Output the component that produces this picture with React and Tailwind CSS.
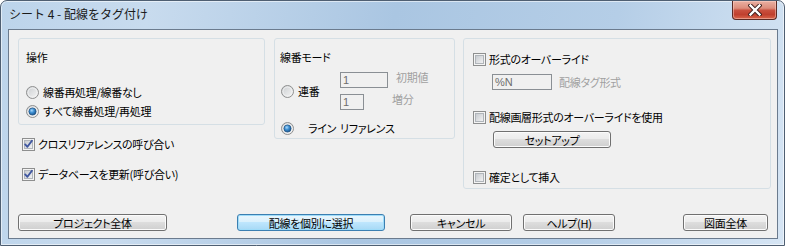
import React, { useId } from "react";

function CheckBox({ checked }) {
  const id = useId().replace(/:/g, "");
  return (
    <svg width="13" height="13" viewBox="0 0 13 13" className="shrink-0 block">
      <defs>
        <linearGradient id={"cb" + id} x1="0" y1="0" x2="1" y2="1">
          <stop offset="0" stopColor="#c5c9ce" />
          <stop offset="1" stopColor="#f4f4f5" />
        </linearGradient>
      </defs>
      <rect x="0.5" y="0.5" width="12" height="12" fill="#f4f4f4" stroke="#8e8f8f" />
      <rect x="2.5" y="2.5" width="8" height="8" fill={`url(#cb${id})`} stroke="#b0b5ba" />
      {checked && (
        <path d="M3.2 6.4 L5.4 8.8 L9.9 2.8" fill="none" stroke="#3f57a0" strokeWidth="1.9" strokeLinecap="round" strokeLinejoin="round" />
      )}
    </svg>
  );
}

function Radio({ checked }) {
  const id = useId().replace(/:/g, "");
  return (
    <svg width="13" height="13" viewBox="0 0 13 13" className="shrink-0 block">
      <defs>
        <linearGradient id={"rb" + id} x1="0" y1="0" x2="1" y2="1">
          <stop offset="0" stopColor="#c9cccf" />
          <stop offset="1" stopColor="#f7f7f7" />
        </linearGradient>
        <radialGradient id={"rd" + id} cx="0.4" cy="0.35" r="0.7">
          <stop offset="0" stopColor="#a9d8fb" />
          <stop offset="0.45" stopColor="#3d8fd2" />
          <stop offset="1" stopColor="#174f87" />
        </radialGradient>
      </defs>
      <circle cx="6.5" cy="6.5" r="6" fill={`url(#rb${id})`} stroke="#8e8f8f" />
      <circle cx="6.5" cy="6.5" r="4.5" fill="none" stroke="#f2f2f2" strokeWidth="0.8" />
      {checked && <circle cx="6.5" cy="6.5" r="3.6" fill={`url(#rd${id})`} stroke="#1c4f7f" strokeWidth="0.7" />}
    </svg>
  );
}

function Btn({ children, className }) {
  return (
    <div
      className={
        "h-[17px] flex items-center justify-center rounded-[3px] border border-[#707070] bg-[linear-gradient(to_bottom,#f3f3f3_0%,#ebebeb_50%,#dddddd_50%,#cfcfcf_100%)] shadow-[inset_0_0_0_1px_#fbfbfb] leading-[14px] text-black " +
        className
      }
    >
      {children}
    </div>
  );
}

function DefBtn({ children, className }) {
  return (
    <div
      className={
        "h-[17px] flex items-center justify-center rounded-[3px] border border-[#3c7fb1] bg-[linear-gradient(to_bottom,#eaf6fd_0%,#d9f0fc_50%,#bee6fd_50%,#a7d9f5_100%)] shadow-[inset_0_0_0_1px_#9fdcf9] leading-[14px] text-black " +
        className
      }
    >
      {children}
    </div>
  );
}

export default function App() {
  return (
    <div className="w-[785px] h-[246px] flex flex-col rounded-t-[7px] border border-[#4f5f72] overflow-hidden bg-[linear-gradient(100deg,#bcd4eb_0%,#c8dbee_18%,#aac6e2_48%,#b5cee7_75%,#d6e5f4_100%)] shadow-[inset_0_0_0_1px_rgba(255,255,255,0.55)] font-['Noto_Sans_CJK_JP',sans-serif] text-black">
      {/* Title bar */}
      <div className="h-[28px] flex items-start justify-between shrink-0">
        <div className="pl-[8px] pt-[5px] text-[12px] leading-[16px] text-[#1a1a1a]">
          シート 4 - 配線をタグ付け
        </div>
        <div className="mr-[7px] w-[45px] h-[19px] rounded-b-[4px] border border-t-0 border-[#5b2a24] bg-[linear-gradient(to_bottom,#eab0a2_0%,#dc8d7c_40%,#c9503e_52%,#c0402e_75%,#d9654a_100%)] shadow-[inset_0_0_0_1px_rgba(255,220,210,0.45)] flex items-center justify-center">
          <svg width="14" height="12" viewBox="0 0 14 12">
            <path d="M2.5 1.5 L11.5 10.5 M11.5 1.5 L2.5 10.5" stroke="#3d1f1c" strokeWidth="4.2" strokeLinecap="square" />
            <path d="M2.5 1.5 L11.5 10.5 M11.5 1.5 L2.5 10.5" stroke="#ffffff" strokeWidth="2.4" strokeLinecap="square" />
          </svg>
        </div>
      </div>

      {/* Body with frame */}
      <div className="flex-1 pl-[7px] pb-[6px]">
        <div className="w-[770px] h-[210px] border border-[#6b7b8e] bg-[#f0f0f0] flex flex-col text-[11px] leading-[16px] tracking-[-0.3px] [font-feature-settings:'palt'] font-features-['palt']">
          {/* top area */}
          <div className="flex items-start pl-[9px] pt-[8px]">
            {/* left column */}
            <div className="w-[247px] flex flex-col">
              <div className="h-[87px] rounded-[3px] border border-[#d5dfe5] pl-[7px] pt-[10px] flex flex-col">
                <div className="h-[16px]">操作</div>
                <div className="mt-[19px] h-[16px] flex items-center gap-[4px]">
                  <Radio />
                  <span>線番再処理/線番なし</span>
                </div>
                <div className="mt-[3px] h-[16px] flex items-center gap-[4px]">
                  <Radio checked />
                  <span>すべて線番処理/再処理</span>
                </div>
              </div>
              <div className="pl-[4px] mt-[11px] h-[16px] flex items-center gap-[3px]">
                <CheckBox checked />
                <span>クロスリファレンスの呼び合い</span>
              </div>
              <div className="pl-[4px] mt-[14px] h-[16px] flex items-center gap-[3px]">
                <CheckBox checked />
                <span>データベースを更新(呼び合い)</span>
              </div>
            </div>

            {/* middle group */}
            <div className="ml-[9px] w-[181px] h-[101px] rounded-[3px] border border-[#d5dfe5] pl-[5px] pt-[10px] flex flex-col">
              <div className="h-[16px]">線番モード</div>
              <div className="mt-[7px] flex items-center">
                <div className="w-[60px] pl-[1px] flex items-center gap-[4px]">
                  <Radio />
                  <span>連番</span>
                </div>
                <div className="flex flex-col">
                  <div className="flex items-start">
                    <div className="w-[48px] h-[16px] border border-[#8a8f94] bg-[#f0f0f0] pl-[2px] text-[11px] leading-[14px] tracking-normal text-[#6d6d6d] font-['Liberation_Sans',sans-serif]">1</div>
                    <span className="ml-[8px] -mt-[1px] leading-[12px] text-[#a0a0a0]">初期値</span>
                  </div>
                  <div className="mt-[6px] flex items-start">
                    <div className="w-[24px] h-[16px] border border-[#8a8f94] bg-[#f0f0f0] pl-[2px] text-[11px] leading-[14px] tracking-normal text-[#6d6d6d] font-['Liberation_Sans',sans-serif]">1</div>
                    <span className="ml-[28px] -mt-[1px] leading-[12px] text-[#a0a0a0]">増分</span>
                  </div>
                </div>
              </div>
              <div className="mt-[10px] h-[16px] pl-[1px] flex items-center">
                <Radio checked />
                <span className="ml-[14px]">ライン</span>
                <span className="ml-[4px]">リファレンス</span>
              </div>
            </div>

            {/* right group */}
            <div className="ml-[8px] w-[308px] h-[151px] rounded-[3px] border border-[#d5dfe5] pl-[9px] pt-[12px] flex flex-col">
              <div className="h-[16px] flex items-center gap-[3px]">
                <CheckBox />
                <span>形式のオーバーライド</span>
              </div>
              <div className="mt-[7px] flex items-center">
                <div className="ml-[19px] w-[60px] h-[16px] border border-[#8a8f94] bg-[#f0f0f0] pl-[2px] text-[11px] leading-[14px] tracking-normal text-[#6d6d6d] font-['Liberation_Sans',sans-serif]">%N</div>
                <span className="ml-[7px] text-[#a0a0a0]">配線タグ形式</span>
              </div>
              <div className="mt-[19px] h-[16px] flex items-center gap-[3px]">
                <CheckBox />
                <span>配線画層形式のオーバーライドを使用</span>
              </div>
              <Btn className="mt-[6px] ml-[20px] w-[118px]">セットアップ</Btn>
              <div className="mt-[21px] h-[16px] flex items-center gap-[3px]">
                <CheckBox />
                <span>確定として挿入</span>
              </div>
            </div>
          </div>

          {/* bottom buttons */}
          <div className="mt-[25px] pl-[9px] flex items-center">
            <Btn className="w-[149px]">プロジェクト全体</Btn>
            <DefBtn className="ml-[70px] w-[148px]">配線を個別に選択</DefBtn>
            <Btn className="ml-[25px] w-[102px]">キャンセル</Btn>
            <Btn className="ml-[11px] w-[92px]">ヘルプ(H)</Btn>
            <Btn className="ml-[68px] w-[85px]">図面全体</Btn>
          </div>
        </div>
      </div>
    </div>
  );
}
